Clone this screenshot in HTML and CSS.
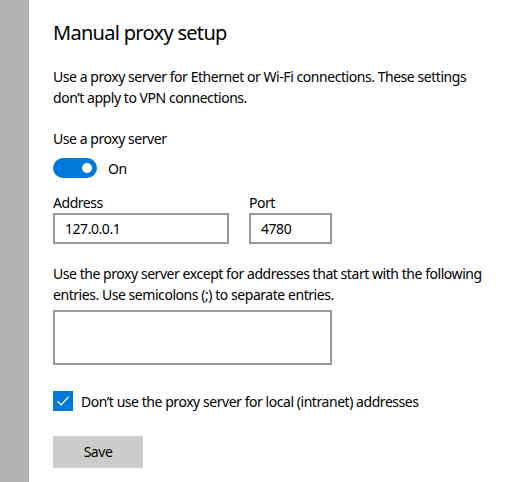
FILE: index.html
```html
<!DOCTYPE html>
<html>
<head>
<meta charset="utf-8">
<link rel="stylesheet" href="styles.css">
</head>
<body>
<div class="page">
  <aside class="strip"></aside>
  <main class="content">
    <h1 class="title">Manual proxy setup</h1>
    <p class="desc">Use a proxy server for Ethernet or Wi-Fi connections. These settings don’t apply to VPN connections.</p>
    <div class="label">Use a proxy server</div>
    <div class="toggle-row">
      <span class="toggle"><span class="knob"></span></span>
      <span class="toggle-text">On</span>
    </div>
    <div class="fields">
      <div class="field">
        <div class="field-label">Address</div>
        <div class="input input-address">127.0.0.1</div>
      </div>
      <div class="field">
        <div class="field-label">Port</div>
        <div class="input input-port">4780</div>
      </div>
    </div>
    <p class="desc desc2">Use the proxy server except for addresses that start with the following entries. Use semicolons (;) to separate entries.</p>
    <div class="textarea"></div>
    <div class="check-row">
      <span class="checkbox">
        <svg width="20" height="20" viewBox="0 0 20 20"><path d="M4.5 10.2 L8.2 13.9 L15.6 5.8" fill="none" stroke="#fff" stroke-width="1.3"/></svg>
      </span>
      <span class="check-text">Don’t use the proxy server for local (intranet) addresses</span>
    </div>
    <div class="btn">Save</div>
  </main>
</div>
</body>
</html>
```

FILE: styles.css
```css
html, body {
  margin: 0;
  padding: 0;
  background: #fff;
}
body {
  font-family: "Noto Sans", "Open Sans", sans-serif;
  color: #000;
  font-size: 14px;
  letter-spacing: -0.45px;
}
.page {
  display: flex;
  min-height: 482px;
}
.strip {
  width: 29px;
  flex: none;
  background: #b2b2b2;
}
.content {
  padding: 19px 0 0 24px;
  flex: 1;
}
.title {
  margin: 0;
  font-size: 20px;
  font-weight: 400;
  line-height: 28px;
  letter-spacing: -0.7px;
}
.desc {
  margin: 19px 0 0;
  line-height: 21px;
  width: 440px;
}
.label {
  margin-top: 21px;
  line-height: 20px;
}
.toggle-row {
  display: flex;
  align-items: center;
  margin-top: 9px;
  gap: 11px;
}
.toggle {
  width: 44px;
  height: 20px;
  border-radius: 10px;
  background: #0078d7;
  display: flex;
  align-items: center;
  justify-content: flex-end;
  padding-right: 5px;
  box-sizing: border-box;
}
.knob {
  width: 10px;
  height: 10px;
  border-radius: 50%;
  background: #fff;
}
.fields {
  display: flex;
  gap: 20px;
  margin-top: 15px;
}
.field-label {
  line-height: 20px;
}
.input {
  height: 31px;
  box-sizing: border-box;
  border: 2px solid #999;
  padding: 0 10px;
  line-height: 27px;
}
.input-address { width: 176px; }
.input-port { width: 83px; }
.desc2 {
  margin-top: 19px;
  width: 460px;
}
.textarea {
  width: 279px;
  height: 55px;
  box-sizing: border-box;
  border: 2px solid #999;
  margin-top: 5px;
}
.check-row {
  display: flex;
  align-items: center;
  gap: 8px;
  margin-top: 26px;
}
.checkbox {
  width: 20px;
  height: 20px;
  background: #0078d7;
  display: block;
}
.checkbox svg { display: block; }
.btn {
  margin-top: 25px;
  width: 90px;
  height: 32px;
  background: #ccc;
  text-align: center;
  line-height: 32px;
}
```
